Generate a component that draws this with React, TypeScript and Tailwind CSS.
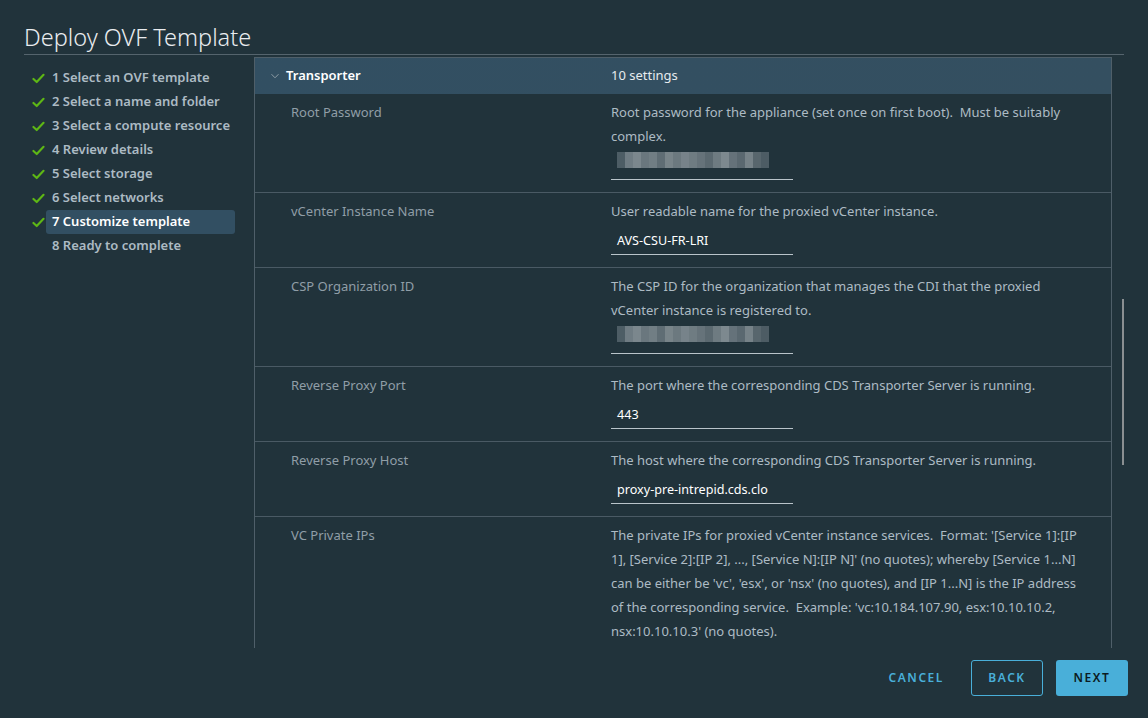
import React from 'react';

const steps = [
  { n: 1, label: 'Select an OVF template', done: true },
  { n: 2, label: 'Select a name and folder', done: true },
  { n: 3, label: 'Select a compute resource', done: true },
  { n: 4, label: 'Review details', done: true },
  { n: 5, label: 'Select storage', done: true },
  { n: 6, label: 'Select networks', done: true },
  { n: 7, label: 'Customize template', done: true, active: true },
  { n: 8, label: 'Ready to complete', done: false },
];

type Row = {
  label: string;
  desc: string;
  value?: string;
  blurred?: boolean;
};

const rows: Row[] = [
  {
    label: 'Root Password',
    desc: 'Root password for the appliance (set once on first boot).  Must be suitably complex.',
    blurred: true,
  },
  {
    label: 'vCenter Instance Name',
    desc: 'User readable name for the proxied vCenter instance.',
    value: 'AVS-CSU-FR-LRI',
  },
  {
    label: 'CSP Organization ID',
    desc: 'The CSP ID for the organization that manages the CDI that the proxied vCenter instance is registered to.',
    blurred: true,
  },
  {
    label: 'Reverse Proxy Port',
    desc: 'The port where the corresponding CDS Transporter Server is running.',
    value: '443',
  },
  {
    label: 'Reverse Proxy Host',
    desc: 'The host where the corresponding CDS Transporter Server is running.',
    value: 'proxy-pre-intrepid.cds.clo',
  },
  {
    label: 'VC Private IPs',
    desc: "The private IPs for proxied vCenter instance services.  Format: '[Service 1]:[IP 1], [Service 2]:[IP 2], ..., [Service N]:[IP N]' (no quotes); whereby [Service 1...N] can be either be 'vc', 'esx', or 'nsx' (no quotes), and [IP 1...N] is the IP address of the corresponding service.  Example: 'vc:10.184.107.90, esx:10.10.10.2, nsx:10.10.10.3' (no quotes).",
  },
];

// pixelated stand-in for the masked values
const blurCells = [
  '#4d5d65', '#6f7c83', '#7b878d', '#6a777e', '#717e84', '#5f6d74', '#788489', '#6c797f',
  '#77838a', '#6f7c82', '#66737a', '#5b6970', '#6e7b81', '#7d898f', '#65727a', '#5a6870',
  '#768288', '#58666d', '#4d5c64',
];

function Check() {
  return (
    <svg className="w-[13px] h-[13px]" viewBox="0 0 16 16">
      <path d="M1.8 8.6 L5.8 12.4 L14.2 3.4" fill="none" stroke="#5eb715" strokeWidth="2.6" strokeLinecap="round" strokeLinejoin="round" />
    </svg>
  );
}

function Blurred() {
  return (
    <div className="flex h-[16px] mt-[4px]">
      {blurCells.map((c, i) => (
        <span key={i} className="w-[8px] h-full" style={{ backgroundColor: c }} />
      ))}
    </div>
  );
}

export default function App() {
  return (
    <div
      className="w-[1148px] h-[718px] overflow-hidden bg-[#21333b] flex flex-col text-[13px]"
      style={{ fontFamily: '"Noto Sans", "Liberation Sans", sans-serif' }}
    >
      <div className="px-[24px] pt-[22px]">
        <h1 className="text-[23.5px] leading-[30px] font-light text-[#e9ecef] pb-[2px] border-b border-[#55646d]">
          Deploy OVF Template
        </h1>
      </div>

      <div className="flex flex-1 min-h-0 pl-[24px] pr-[20px]">
        {/* Steps */}
        <nav className="w-[230px] shrink-0 pt-[11px] flex flex-col">
          {steps.map((s) => (
            <div key={s.n} className="flex items-center h-[24px]">
              <span className="w-[28px] shrink-0 pl-[8px] flex items-center">{s.done && <Check />}</span>
              <span
                className={
                  s.active
                    ? 'flex-1 mr-[19px] h-[24px] rounded-[3px] bg-[#324f62] text-white font-semibold pl-[6px] ml-[-6px] flex items-center'
                    : 'text-[#adbbc4] font-semibold flex items-center'
                }
              >
                {s.n} {s.label}
              </span>
            </div>
          ))}
        </nav>

        {/* Settings panel */}
        <div className="flex flex-1 min-w-0 pt-[2px]">
          <div className="w-[858px] shrink-0 border-l border-r border-[#4f5f69] overflow-hidden">
            <div className="flex h-[37px] items-center bg-gradient-to-r from-[#324f62] to-[#344f60] border-t border-[#4f5f69]">
              <div className="w-[356px] shrink-0 flex items-center pl-[15px]">
                <svg className="w-[10px] h-[10px] mr-[6px]" viewBox="0 0 10 10">
                  <path d="M1.5 3.2 L5 6.8 L8.5 3.2" fill="none" stroke="#8c9ba4" strokeWidth="1" />
                </svg>
                <span className="text-white font-semibold">Transporter</span>
              </div>
              <span className="text-[#e6ebee]">10 settings</span>
            </div>

            {rows.map((r, i) => (
              <div key={r.label} className={i > 0 ? 'flex border-t border-[#4a5a64] pt-[6px] pb-[12px]' : 'flex pt-[6px] pb-[12px]'}>
                <div className="w-[356px] shrink-0 pl-[36px] leading-[24px] text-[#909ea7]">{r.label}</div>
                <div className="flex-1 pr-[20px]">
                  <p className="leading-[24px] text-[#adbbc4] whitespace-pre-wrap">{r.desc}</p>
                  {(r.value !== undefined || r.blurred) && (
                    <div className="mt-[4px] w-[182px] h-[28px] border-b border-[#b9c4ca] pl-[6px]">
                      {r.blurred ? (
                        <Blurred />
                      ) : (
                        <span className="leading-[28px] text-[12.6px] text-white">{r.value}</span>
                      )}
                    </div>
                  )}
                </div>
              </div>
            ))}
          </div>

          {/* scrollbar */}
          <div className="ml-[10px] w-[2px] shrink-0">
            <div className="mt-[242px] h-[166px] w-[2px] bg-[#8a8f91]" />
          </div>
        </div>
      </div>

      {/* Footer */}
      <div className="h-[70px] shrink-0 flex items-start justify-end pr-[20px] pt-[12px] gap-[13px]">
        <button className="h-[36px] px-[12px] mr-[2px] text-[12px] tracking-[0.13em] font-semibold text-[#49afd9]">
          CANCEL
        </button>
        <button className="h-[36px] w-[72px] rounded-[3px] border border-[#49afd9] text-[12px] tracking-[0.13em] font-semibold text-[#49afd9]">
          BACK
        </button>
        <button className="h-[36px] w-[72px] rounded-[3px] bg-[#49afd9] text-[12px] tracking-[0.13em] font-semibold text-[#0c1b22]">
          NEXT
        </button>
      </div>
    </div>
  );
}
